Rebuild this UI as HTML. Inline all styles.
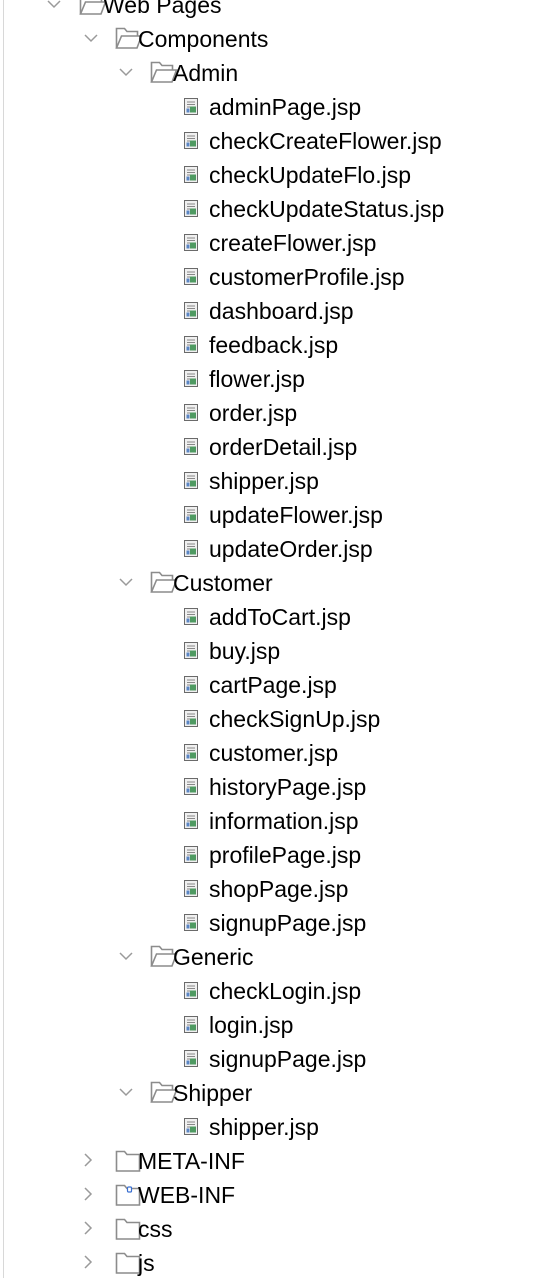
<!DOCTYPE html>
<html><head><meta charset="utf-8"><style>
body{margin:0;width:558px;height:1278px;background:#fff;position:relative;overflow:hidden;font-family:"Liberation Sans",sans-serif;}
.vl{position:absolute;left:3px;top:0;width:1px;height:1278px;background:#d8d8d8}
.r{position:absolute;height:34px;line-height:34px;font-size:23px;color:#000;white-space:nowrap}
.r svg{position:absolute}
</style></head><body>
<div class="vl"></div>
<div id="t"></div>
<script>
const rows=[
[0,'Web Pages','o'],[1,'Components','o'],[2,'Admin','o'],
...['adminPage.jsp','checkCreateFlower.jsp','checkUpdateFlo.jsp','checkUpdateStatus.jsp','createFlower.jsp','customerProfile.jsp','dashboard.jsp','feedback.jsp','flower.jsp','order.jsp','orderDetail.jsp','shipper.jsp','updateFlower.jsp','updateOrder.jsp'].map(n=>[3,n,'f']),
[2,'Customer','o'],
...['addToCart.jsp','buy.jsp','cartPage.jsp','checkSignUp.jsp','customer.jsp','historyPage.jsp','information.jsp','profilePage.jsp','shopPage.jsp','signupPage.jsp'].map(n=>[3,n,'f']),
[2,'Generic','o'],
...['checkLogin.jsp','login.jsp','signupPage.jsp'].map(n=>[3,n,'f']),
[2,'Shipper','o'],[3,'shipper.jsp','f'],
[1,'META-INF','c'],[1,'WEB-INF','w'],[1,'css','c'],[1,'js','c']];
const chevD='<path d="M1 1 L7 7 L13 1" fill="none" stroke="#9a9a9a" stroke-width="1.5"/>';
const chevR='<path d="M1 1 L7 7 L1 13" fill="none" stroke="#9a9a9a" stroke-width="1.5"/>';
const fo='<svg width="28" height="24" style="left:0;top:4px"><path d="M1.5 22 V2.5 H9.5 L12 5.5 H22.5 V10" fill="none" stroke="#8c8c8c" stroke-width="1.6"/><path d="M1.5 22 L6.5 10 H26.5 L22 22 Z" fill="none" stroke="#8c8c8c" stroke-width="1.6"/></svg>';
const fc='<svg width="28" height="24" style="left:0;top:5px"><path d="M1.5 22 V2.5 H9.5 L12 5.5 H24.5 V22 Z" fill="none" stroke="#8c8c8c" stroke-width="1.6"/></svg>';
const fw='<svg width="28" height="24" style="left:0;top:5px"><path d="M1.5 22 V2.5 H9.5 L12 5.5 H24.5 V22 Z" fill="none" stroke="#8c8c8c" stroke-width="1.6"/><rect x="12.5" y="4" width="4" height="5" rx="1" fill="#fff" stroke="#3a6fd0" stroke-width="1.2"/></svg>';
const ff='<svg width="15" height="17" style="left:0;top:8px"><rect x="0.5" y="0.5" width="13" height="16" fill="#f0f0f0" stroke="#6a6a6a"/><path d="M3 4H11M3 6.5H11M3 9H6" stroke="#888"/><rect x="6" y="8.5" width="6" height="6" fill="#4f9a62"/><rect x="2.5" y="10.5" width="3" height="4" fill="#5b86c4"/></svg>';
let h='';
rows.forEach((r,i)=>{
 const y=-12+34*i, lv=r[0];
 const cx=[47,84,119,0][lv], ix=[79,115,150,184][lv], tx=[103,138,173,209][lv];
 const folder=r[2]!=='f';
 if(folder) h+=`<div class="r" style="left:${cx}px;top:${y}px;width:16px"><svg width="16" height="16" style="left:0;top:${r[2]==='o'?12:9}px">${r[2]==='o'?chevD:chevR}</svg></div>`;
 let ic=r[2]==='o'?fo:r[2]==='c'?fc:r[2]==='w'?fw:ff;
 h+=`<div class="r" style="left:${ix}px;top:${y}px;width:28px">${ic}</div>`;
 h+=`<div class="r" style="left:${tx}px;top:${y}px">${r[1]}</div>`;
});
document.getElementById('t').innerHTML=h;
</script>
</body></html>
